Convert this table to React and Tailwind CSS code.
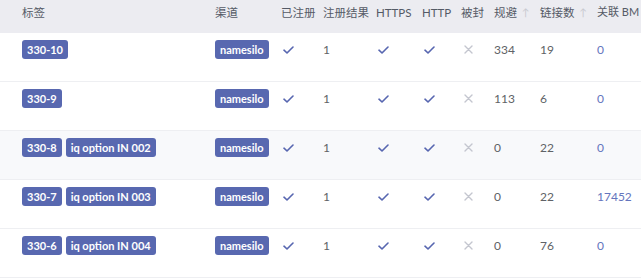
import React from "react";

const Check = () => (
  <svg width="11" height="8" viewBox="0 0 11 8" className="block">
    <path d="M1 4.2 L4 7 L10 1" fill="none" stroke="#5766b0" strokeWidth="1.6" strokeLinecap="round" strokeLinejoin="round" />
  </svg>
);
const Cross = () => (
  <svg width="9" height="9" viewBox="0 0 9 9" className="block">
    <path d="M1 1 L8 8 M8 1 L1 8" fill="none" stroke="#c4c6cf" strokeWidth="1.4" strokeLinecap="round" />
  </svg>
);

const Badge = ({ children }) => (
  <span className="inline-flex h-[19px] items-center rounded-[3px] bg-[#5868b0] px-[5px] text-[11px] font-bold leading-none text-white">
    {children}
  </span>
);

const rows = [
  { tags: ["330-10"], evade: "334", links: "19", bm: "0", bg: "bg-white" },
  { tags: ["330-9"], evade: "113", links: "6", bm: "0", bg: "bg-white" },
  { tags: ["330-8", "iq option IN 002"], evade: "0", links: "22", bm: "0", bg: "bg-[#f8f9fb]" },
  { tags: ["330-7", "iq option IN 003"], evade: "0", links: "22", bm: "17452", bg: "bg-white" },
  { tags: ["330-6", "iq option IN 004"], evade: "0", links: "76", bm: "0", bg: "bg-white" },
];

const cols = "grid grid-cols-[22px_193px_66px_42px_53px_46px_39px_33px_46px_57px_1fr] items-center";

const Arrow = () => <span className="ml-[5px] text-[10px] text-[#c8c9d0]">↑</span>;

export default function App() {
  return (
    <div className="w-[641px] h-[280px] overflow-hidden bg-white text-[12px] text-[#606266] [font-family:Lato,'Noto_Sans_CJK_SC',sans-serif]">
      <div className={`${cols} h-[33px] bg-[#ececf1] text-[11.5px] text-[#555a66] whitespace-nowrap`}>
        <div />
        <div>标签</div>
        <div>渠道</div>
        <div>已注册</div>
        <div>注册结果</div>
        <div>HTTPS</div>
        <div>HTTP</div>
        <div>被封</div>
        <div className="flex items-center">规避<Arrow /></div>
        <div className="flex items-center">链接数<Arrow /></div>
        <div className="text-[11px]">关联 BM</div>
        <div />
      </div>
      {rows.map((r, i) => (
        <div key={i} className={`${cols} h-[49px] border-b border-[#eeeff2] ${r.bg} whitespace-nowrap`}>
          <div />
          <div className="flex gap-[4px]">
            {r.tags.map((t) => (
              <Badge key={t}>{t}</Badge>
            ))}
          </div>
          <div className="flex"><Badge>namesilo</Badge></div>
          <div className="pl-[2px]"><Check /></div>
          <div>1</div>
          <div className="pl-[2px]"><Check /></div>
          <div className="pl-[2px]"><Check /></div>
          <div className="pl-[3px]"><Cross /></div>
          <div>{r.evade}</div>
          <div>{r.links}</div>
          <div className="text-[#6475bd]">{r.bm}</div>
          <div />
        </div>
      ))}
    </div>
  );
}
